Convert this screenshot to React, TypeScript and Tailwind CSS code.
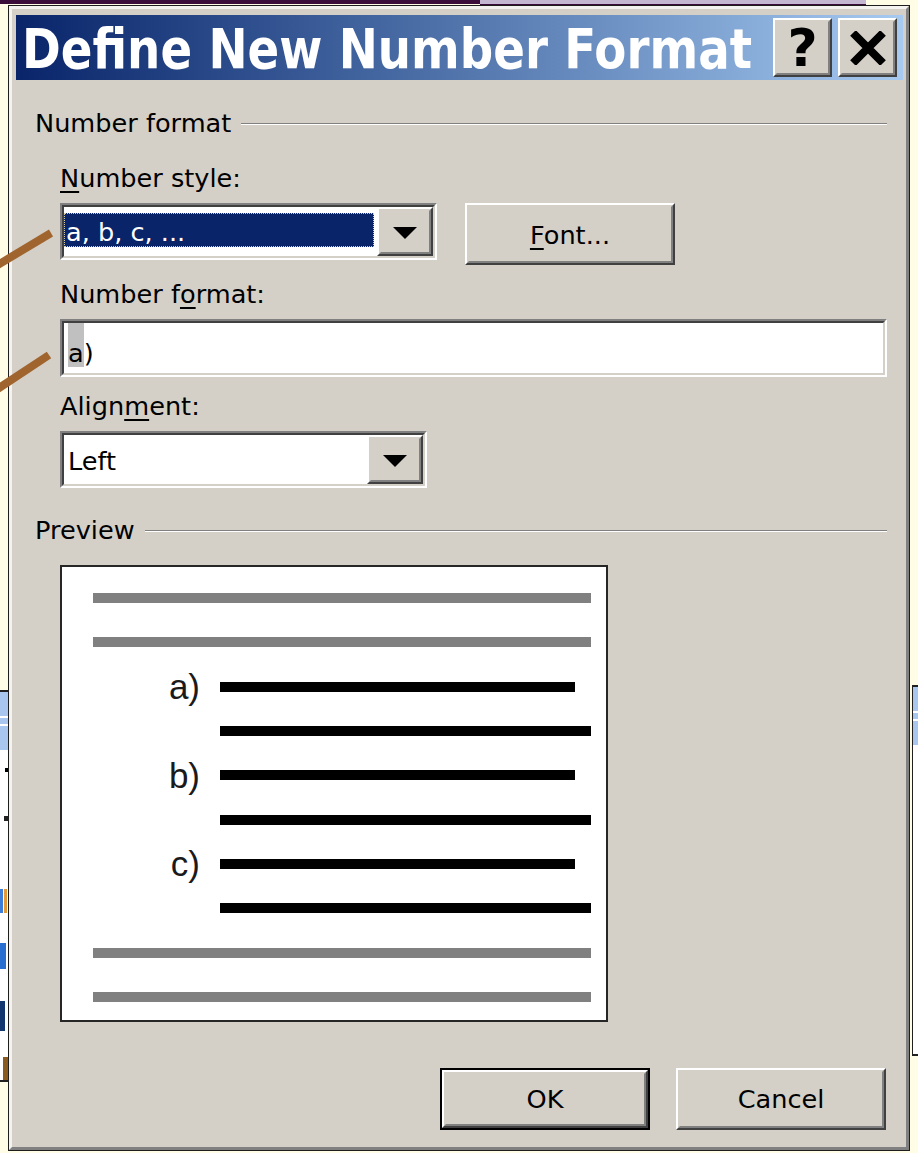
import React from "react";

type Kids = { className?: string; children?: React.ReactNode };

// Classic Windows bevels, two 2px rings each
function Sunken({ className = "", children }: Kids) {
  return (
    <div className={`border-2 border-t-[#808080] border-l-[#808080] border-r-white border-b-white ${className}`}>
      <div className="h-full border-2 border-t-[#404040] border-l-[#404040] border-r-[#d4d0c8] border-b-[#d4d0c8] bg-white">
        {children}
      </div>
    </div>
  );
}

function Raised({ className = "", children }: Kids) {
  return (
    <div className={`border-2 border-t-white border-l-white border-r-[#404040] border-b-[#404040] bg-[#d4d0c8] ${className}`}>
      <div className="flex h-full items-center justify-center border-2 border-t-[#d4d0c8] border-l-[#d4d0c8] border-r-[#808080] border-b-[#808080]">
        {children}
      </div>
    </div>
  );
}

const Arrow = () => (
  <svg width="24" height="12" viewBox="0 0 24 12">
    <path d="M0 0h24L12 12z" fill="#000" />
  </svg>
);

function Combo({ className = "", children }: Kids) {
  return (
    <Sunken className={className}>
      <div className="flex h-full">
        <div className="min-w-0 flex-1">{children}</div>
        <Raised className="h-full w-[56px] shrink-0">
          <div className="pt-[2px]">
            <Arrow />
          </div>
        </Raised>
      </div>
    </Sunken>
  );
}

const Key = ({ children }: Kids) => (
  <span className="underline decoration-2 underline-offset-[4px]">{children}</span>
);

function GroupHeader({ title }: { title: string }) {
  return (
    <div className="flex h-[30px] items-center gap-[10px]">
      <span className="whitespace-nowrap">{title}</span>
      <div className="flex flex-1 flex-col pt-[1px]">
        <div className="h-px bg-[#808080]" />
        <div className="h-px bg-white" />
      </div>
    </div>
  );
}

type Row = { kind: "gray" } | { kind: "item"; label?: string; short?: boolean };

const previewRows: Row[] = [
  { kind: "gray" },
  { kind: "gray" },
  { kind: "item", label: "a)", short: true },
  { kind: "item" },
  { kind: "item", label: "b)", short: true },
  { kind: "item" },
  { kind: "item", label: "c)", short: true },
  { kind: "item" },
  { kind: "gray" },
  { kind: "gray" },
];

function Preview() {
  return (
    <div className="ml-[25px] mt-[20px] h-[457px] w-[548px] border-2 border-[#262626] bg-white pt-[9px]">
      {previewRows.map((row, i) =>
        row.kind === "gray" ? (
          <div key={i} className="flex h-[44.3px] items-center pl-[31px]">
            <div className="h-[10px] w-[498px] bg-[#808080]" />
          </div>
        ) : (
          <div key={i} className="flex h-[44.3px] items-center gap-[20px]">
            <span className="w-[138px] text-right font-['Liberation_Sans',Arial,sans-serif] text-[35px] leading-[35px] text-[#1a1a1a]">
              {row.label ?? ""}
            </span>
            <div className={`h-[10px] bg-black ${row.short ? "w-[355px]" : "w-[371px]"}`} />
          </div>
        )
      )}
    </div>
  );
}

function TitleBar() {
  return (
    <div className="ml-[4px] mr-[3px] flex h-[65px] items-start bg-linear-to-r from-[#0a246a] to-[#a6caf0]">
      <span className="min-w-0 flex-1 origin-left scale-x-[0.85] whitespace-nowrap pl-[7px] pt-[3px] font-['DejaVu_Sans',sans-serif] text-[55px] font-bold leading-[62px] text-white">
        Define New Number Format
      </span>
      <div className="flex shrink-0 gap-[6px] self-center pr-[6px]">
        <Raised className="h-[59px] w-[59px]">
          <span className="font-['DejaVu_Sans',sans-serif] text-[52px] font-bold leading-none">?</span>
        </Raised>
        <Raised className="h-[59px] w-[59px]">
          <svg width="38" height="34" viewBox="0 0 38 34">
            <path d="M4 2 L34 32 M34 2 L4 32" stroke="#000" strokeWidth="8" />
          </svg>
        </Raised>
      </div>
    </div>
  );
}

function Dialog() {
  return (
    <div className="relative z-10 h-[1146px] w-[902px] overflow-hidden border border-[#1e1e1e] bg-[#d4d0c8]">
      <div className="h-full border-[3px] border-t-[#f4f3ef] border-l-[#f4f3ef] border-r-[#808080] border-b-[#808080] pt-[6px]">
        <TitleBar />

        <div className="pl-[23px] pr-[19px] pt-[28px] font-['DejaVu_Sans',sans-serif] text-[25.6px] leading-[30px] text-black">
          <GroupHeader title="Number format" />

          <div className="pl-[25px]">
            <div className="mt-[25px]">
              <Key>N</Key>umber style:
            </div>
            <div className="mt-[10px] flex items-start gap-[28px]">
              <Combo className="h-[57px] w-[377px]">
                <div className="h-full pb-[9px] pr-[3px] pt-[6px]">
                  <div className="h-full whitespace-nowrap border border-dotted border-[#d9cf9a] bg-[#0a246a] pl-[1px] pt-[3px] text-white">
                    a, b, c, ...
                  </div>
                </div>
              </Combo>
              <Raised className="h-[62px] w-[210px]">
                <span className="pt-[1px]">
                  <Key>F</Key>ont...
                </span>
              </Raised>
            </div>

            <div className="mt-[14px]">
              Number f<Key>o</Key>rmat:
            </div>
            <Sunken className="mt-[10px] h-[58px] w-full">
              <div className="flex h-full items-start pl-[4px]">
                <span className="block h-[44px] bg-[#c0c0c0] pt-[15px]">a</span>
                <span className="block pt-[15px]">)</span>
              </div>
            </Sunken>

            <div className="mt-[14px]">
              Align<Key>m</Key>ent:
            </div>
            <Combo className="mt-[10px] h-[57px] w-[367px]">
              <div className="pl-[4px] pt-[11px]">Left</div>
            </Combo>
          </div>

          <div className="mt-[27px]">
            <GroupHeader title="Preview" />
          </div>
          <Preview />

          <div className="mt-[46px] flex justify-end gap-[26px] pr-[1px]">
            <div className="h-[62px] w-[210px] border-2 border-black">
              <Raised className="h-full">OK</Raised>
            </div>
            <Raised className="h-[62px] w-[210px]">Cancel</Raised>
          </div>
        </div>
      </div>
    </div>
  );
}

// Bits of the slide that sit behind the dialog
function SlideBackdrop() {
  return (
    <>
      <div className="absolute left-0 top-0 h-[4px] w-[480px] bg-[#3b0d3b]" />
      <div className="absolute left-[480px] top-0 h-[6px] w-[386px] border-b-2 border-[#3b0d3b] bg-[#c4b7d2]" />

      <div className="absolute left-0 top-[690px] h-[392px] w-[9px] overflow-hidden border-y-2 border-[#202020] bg-white">
        <div className="flex h-[58px] flex-col justify-center gap-[6px] bg-[#a9c6ee]">
          <div className="h-[2px] bg-white" />
          <div className="h-[2px] bg-white" />
        </div>
        <div className="ml-[5px] mt-[18px] h-[4px] w-[3px] bg-black" />
        <div className="ml-[4px] mt-[44px] h-[5px] w-[4px] bg-[#222]" />
        <div className="mt-[68px] flex gap-[1px]">
          <div className="h-[24px] w-[3px] bg-[#3d7fd8]" />
          <div className="h-[24px] w-[3px] bg-[#e59a3a]" />
        </div>
        <div className="mt-[30px] h-[26px] w-[6px] bg-[#2a6fd0]" />
        <div className="mt-[32px] h-[30px] w-[5px] bg-[#14366e]" />
        <div className="ml-[3px] mt-[26px] h-[28px] w-[5px] bg-[#8b5a1e]" />
        <div className="mt-[4px] h-[3px] w-[8px] bg-[#e03030]" />
      </div>

      <div className="absolute left-[912px] top-[685px] h-[371px] w-[6px] border-y-2 border-l border-[#202020] bg-white">
        <div className="flex h-[58px] flex-col justify-center gap-[6px] bg-[#a9c6ee]">
          <div className="h-[2px] bg-white" />
          <div className="h-[2px] bg-white" />
        </div>
      </div>
    </>
  );
}

export default function App() {
  return (
    <div className="relative h-[1153px] w-[918px] overflow-hidden bg-[#fffde6] pl-[8px] pt-[5px]">
      <SlideBackdrop />
      <Dialog />
      {/* callout pointers from the slide */}
      <svg className="absolute left-0 top-0 z-20" width="60" height="420" viewBox="0 0 60 420">
        <path d="M-4 266 L51 233" stroke="#a0652f" strokeWidth="8" />
        <path d="M-4 390 L49 355" stroke="#a0652f" strokeWidth="8" />
      </svg>
    </div>
  );
}
